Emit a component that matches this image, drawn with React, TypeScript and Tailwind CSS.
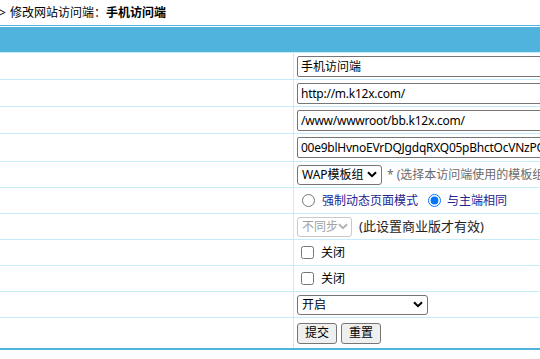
import React from "react";

const FONT = "font-['Noto_Sans','Noto_Sans_CJK_SC',sans-serif]";

function Row({ h, children, last }: { h: string; children?: React.ReactNode; last?: boolean }) {
  return (
    <div
      className={
        "grid grid-cols-[294px_1fr] " +
        h +
        (last ? " border-b-2 border-[#4fb3dd]" : " border-b border-[#c6ebfb]")
      }
    >
      <div className="border-r border-[#c6ebfb]" />
      <div className="flex items-center pl-[3px] whitespace-nowrap overflow-hidden">{children}</div>
    </div>
  );
}

function TextBox({ value, tight }: { value: string; tight?: boolean }) {
  return (
    <input
      readOnly
      value={value}
      className={
        "h-[21px] w-[300px] shrink-0 border border-[#767676] rounded-[2px] px-[3px] text-[12px] leading-[19px] text-black outline-none" +
        (tight ? " tracking-[-0.25px]" : "")
      }
    />
  );
}

function Chevron({ color = "#000" }: { color?: string }) {
  return (
    <svg width="10" height="7" viewBox="0 0 10 7" className="shrink-0">
      <path d="M1 1.2 L5 5.2 L9 1.2" fill="none" stroke={color} strokeWidth="2" />
    </svg>
  );
}

export default function App() {
  return (
    <div className={"w-[540px] h-[359px] overflow-hidden bg-white text-[12px] text-black " + FONT}>
      <div className="h-[25px] flex items-center whitespace-nowrap leading-none">
        <span className="ml-[-1px] w-[11px]">&gt;</span>
        <span>修改网站访问端：</span>
        <span className="font-bold">手机访问端</span>
      </div>
      <div className="h-[28px] border-t border-[#4fb3dd] pt-px border-b border-b-[#c6ebfb]">
        <div className="h-[25px] bg-[#4fb3dd]" />
      </div>

      <Row h="h-[27px]">
        <TextBox value="手机访问端" />
      </Row>
      <Row h="h-[27px]">
        <TextBox value="http://m.k12x.com/" tight />
      </Row>
      <Row h="h-[27px]">
        <TextBox value="/www/wwwroot/bb.k12x.com/" tight />
      </Row>
      <Row h="h-[28px]">
        <TextBox value="00e9blHvnoEVrDQJgdqRXQ05pBhctOcVNzPO" tight />
      </Row>

      <Row h="h-[26px]">
        <div className="h-[20px] w-[85px] shrink-0 border border-[#767676] rounded-[3px] flex items-center justify-between pl-[4px] pr-[4px] leading-none">
          <span>WAP模板组</span>
          <Chevron />
        </div>
        <span className="ml-[5px] text-[#6b6b6b]">* (选择本访问端使用的模板组)</span>
      </Row>

      <Row h="h-[26px]">
        <input type="radio" name="m" readOnly className="ml-[5px] w-[13px] h-[13px] shrink-0" />
        <span className="ml-[7px] text-[#23238f]">强制动态页面模式</span>
        <input type="radio" name="m" readOnly checked className="ml-[10px] w-[13px] h-[13px] shrink-0" />
        <span className="ml-[6px] text-[#23238f]">与主端相同</span>
      </Row>

      <Row h="h-[26px]">
        <div className="h-[20px] w-[55px] shrink-0 border border-[#c9c9c9] rounded-[3px] flex items-center justify-between pl-[4px] pr-[4px] leading-none text-[#a0a0a0] bg-white">
          <span>不同步</span>
          <Chevron color="#b4b4b4" />
        </div>
        <span className="ml-[7px] text-[13px] text-[#222]">(此设置商业版才有效)</span>
      </Row>

      <Row h="h-[26px]">
        <input type="checkbox" readOnly className="ml-[4px] w-[13px] h-[13px] shrink-0" />
        <span className="ml-[7px]">关闭</span>
      </Row>
      <Row h="h-[26px]">
        <input type="checkbox" readOnly className="ml-[4px] w-[13px] h-[13px] shrink-0" />
        <span className="ml-[7px]">关闭</span>
      </Row>

      <Row h="h-[26px]">
        <div className="h-[20px] w-[131px] shrink-0 border border-[#767676] rounded-[3px] flex items-center justify-between pl-[4px] pr-[4px] leading-none">
          <span>开启</span>
          <Chevron />
        </div>
      </Row>

      <Row h="h-[32px]" last>
        <button className="h-[21px] w-[40px] border border-[#767676] rounded-[3px] bg-[#efefef] leading-none">提交</button>
        <button className="ml-[4px] h-[21px] w-[40px] border border-[#767676] rounded-[3px] bg-[#efefef] leading-none">重置</button>
      </Row>
    </div>
  );
}
